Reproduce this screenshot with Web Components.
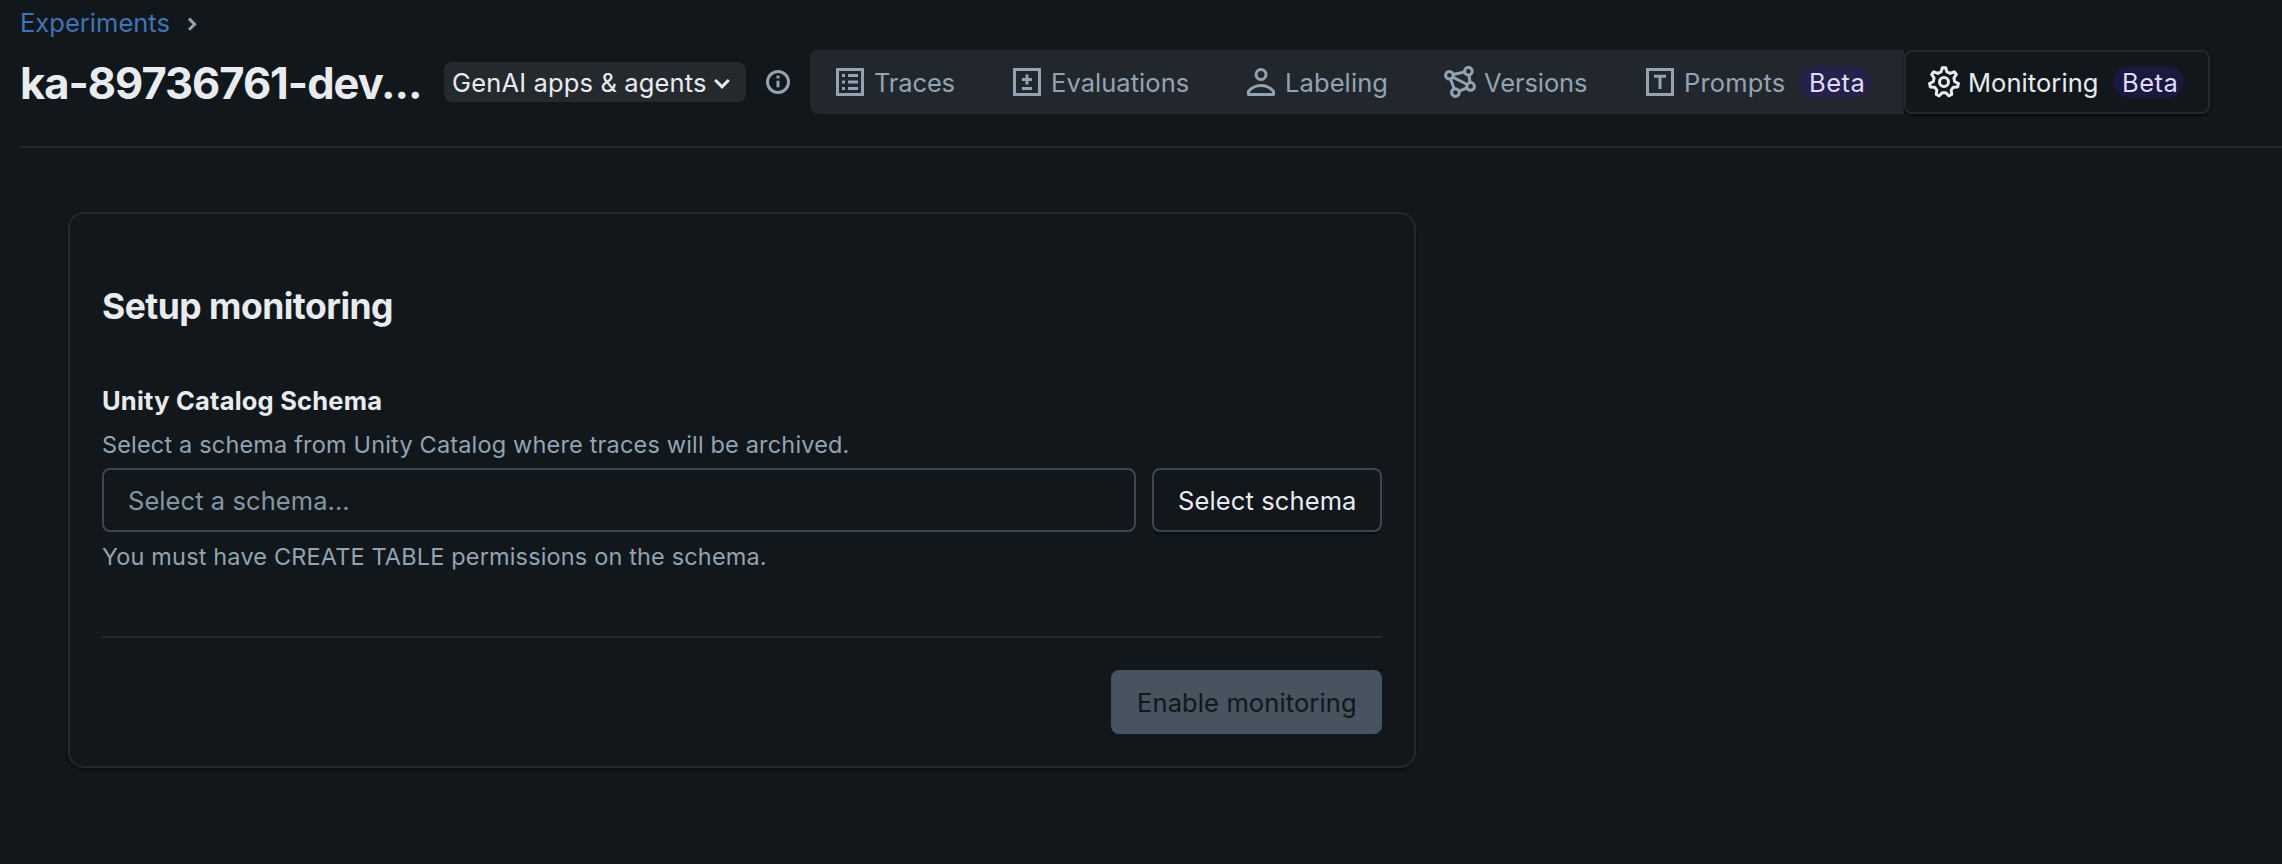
<!DOCTYPE html>
<html lang="en">
<head>
<meta charset="utf-8">
<title>Experiments - Monitoring</title>
<style>
  html, body { margin: 0; height: 100%; background: #11171b; overflow: hidden; }
  body {
    --bg: #11171b;
    --text: #e8ecf0;
    --muted: #92a4b3;
    --border: #22282d;
    --control-border: #3b4650;
    font: 400 25.5px/31px Inter, "Liberation Sans", sans-serif;
    color: var(--text);
  }
</style>
</head>
<body>
<experiment-page>
  <page-breadcrumb slot="breadcrumb">Experiments</page-breadcrumb>
  <page-header slot="header" heading="ka-89736761-dev..." kind="GenAI apps &amp; agents">
    <tab-item icon="list" style="width:177px;--ls:-.15px">Traces</tab-item>
    <tab-item icon="plusminus" style="width:234px;--ls:.05px">Evaluations</tab-item>
    <tab-item icon="user" style="width:199px;--ls:.1px">Labeling</tab-item>
    <tab-item icon="graph" style="width:200px;--ls:-.1px">Versions</tab-item>
    <tab-item icon="text" beta style="width:284px;--ls:.15px">Prompts</tab-item>
    <tab-item icon="gear" beta selected style="width:306px;--ls:.07px">Monitoring</tab-item>
  </page-header>
  <monitoring-card></monitoring-card>
</experiment-page>
<script>
const define = (name, render) => customElements.define(name, class extends HTMLElement {
  connectedCallback() {
    if (this.shadowRoot) return;
    this.attachShadow({ mode: 'open' }).innerHTML = render(this);
  }
});

/* Outline of a gear with seven rounded teeth around (8, 8). */
const gearPath = () => {
  const pts = [], step = Math.PI * 2 / 7;
  for (let i = 0; i < 7; i++) {
    const a = -Math.PI / 2 + i * step;
    for (const [k, r] of [[-.31, 5.35], [-.13, 7.25], [.13, 7.25], [.31, 5.35]])
      pts.push([8 + r * Math.cos(a + k * step), 8.05 + r * Math.sin(a + k * step)]);
  }
  return 'M' + pts.map(p => p.map(n => n.toFixed(2)).join(' ')).join('L') + 'Z';
};

const frame = '<rect x="1.75" y="1.75" width="12.5" height="12.5"/>';
const icons = {
  list: frame + '<path d="M7 4.75h5M7 8h5M7 11.25h5M4 4.75h1.5M4 8h1.5M4 11.25h1.5"/>',
  plusminus: frame + '<path d="M5.5 6.75h5M8 4.25v5M5.5 11.25h5"/>',
  user: '<circle cx="8" cy="4.25" r="2.5"/><path stroke-linejoin="round" d="M1.75 14.25v-1.5A8 8 0 0 1 8 9.75a8 8 0 0 1 6.25 3v1.5z"/>',
  graph: '<circle cx="2.7" cy="4.65" r="1.9"/><circle cx="12.2" cy="2.6" r="1.9"/><circle cx="13.3" cy="10.2" r="1.9"/><circle cx="5.7" cy="13.3" r="1.9"/><path d="M4.55 4.25 10.3 3M12.45 4.5l.6 3.8M4.35 5.6l7.3 3.65M3.25 6.5l1.9 5M7.5 12.6l4-1.6"/>',
  text: frame + '<path d="M5 5.1h6M8 5.1v6.4"/>',
  gear: `<path stroke-linejoin="round" d="${gearPath()}"/><circle cx="8" cy="8" r="2.25"/>`,
  info: '<circle cx="8" cy="8" r="5.25"/><path d="M8 7.4v3.2M8 4.8v1.5"/>',
  down: '<path d="M4.6 6.5 8 9.9l3.4-3.4"/>',
  right: '<path d="M6.5 5.3 9.3 8.1l-2.8 2.8"/>'
};

define('ui-icon', el => `
  <style>
    :host { display: block; flex: none; width: 32px; height: 32px; }
    svg { display: block; width: 100%; height: 100%; fill: none; stroke: currentColor; stroke-width: 1.5; }
  </style>
  <svg viewBox="0 0 16 16">${icons[el.getAttribute('name')]}</svg>`);

define('experiment-page', () => `
  <style>:host { display: block; height: 864px; background: var(--bg); }</style>
  <slot name="breadcrumb"></slot><slot name="header"></slot><slot></slot>`);

define('page-breadcrumb', () => `
  <style>
    :host { display: flex; align-items: flex-start; box-sizing: border-box; height: 50px; padding: 7px 0 0 20px; }
    a { color: #3f74b5; letter-spacing: .02px; width: 150px; }
    ui-icon { color: var(--muted); margin: 1px 0 0 6px; }
  </style>
  <a><slot></slot></a><ui-icon name="right"></ui-icon>`);

define('page-header', el => `
  <style>
    :host { display: flex; align-items: center; box-sizing: border-box; height: 98px; margin-left: 20px;
      padding-bottom: 32px; border-bottom: 2px solid var(--border); }
    h1 { margin: 0; padding-top: 2px; width: 424px; font-size: 43.5px; line-height: 52px; font-weight: 700;
      letter-spacing: -1.02px; white-space: nowrap; }
    .kind { display: flex; align-items: center; box-sizing: border-box; width: 302px; height: 40px; padding-left: 8px;
      background: #24292e; border-radius: 8px; white-space: nowrap; letter-spacing: .15px; }
    .kind span { padding-top: 1px; width: 254px; }
    .kind ui-icon { margin-top: 1px; }
    .info { margin: 0 16px; color: var(--muted); }
    nav { display: flex; height: 64px; }
  </style>
  <h1>${el.getAttribute('heading')}</h1>
  <div class="kind"><span>${el.getAttribute('kind').replace('&', '&amp;')}</span><ui-icon name="down"></ui-icon></div>
  <ui-icon class="info" name="info"></ui-icon>
  <nav><slot></slot></nav>`);

define('beta-tag', () => `
  <style>
    :host { display: block; box-sizing: border-box; width: 71px; height: 32px; margin-right: 2px; padding: 1px 0 0 9px;
      border-radius: 16px; background: rgba(42, 25, 130, .34); color: #e2daff; letter-spacing: .49px; }
  </style>Beta`);

define('tab-item', el => `
  <style>
    :host { display: flex; align-items: center; box-sizing: border-box; height: 64px; padding: 0 24px;
      background: #22272e; color: var(--muted); }
    :host(:first-child) { border-radius: 8px 0 0 8px; }
    :host([selected]) { padding: 0 22px; border: 2px solid var(--border); border-radius: 8px; background: var(--bg);
      color: var(--text); box-shadow: 0 2px 3px rgba(0, 0, 0, .45); }
    span { flex: 1; padding: 1px 0 0 8px; letter-spacing: var(--ls); white-space: nowrap; }
    :host([icon=text]) beta-tag { margin-right: 9px; }
  </style>
  <ui-icon name="${el.getAttribute('icon')}"></ui-icon><span><slot></slot></span>
  ${el.hasAttribute('beta') ? '<beta-tag></beta-tag>' : ''}`);

define('ui-button', () => `
  <style>
    :host { display: block; box-sizing: border-box; height: 64px; padding: 15px 24px; border: 2px solid var(--control-border);
      border-radius: 8px; letter-spacing: .12px; white-space: nowrap; box-shadow: 0 2px 1px rgba(0, 0, 0, .4); }
    :host([disabled]) { background: #47535e; border-color: #47535e; color: var(--bg); box-shadow: none; }
  </style><slot></slot>`);

define('text-field', () => `
  <style>
    :host { display: block; box-sizing: border-box; height: 64px; padding: 15px 24px; border: 2px solid var(--control-border);
      border-radius: 8px; color: #8496a4; letter-spacing: .07px; }
  </style><slot></slot>`);

define('monitoring-card', () => `
  <style>
    :host { display: block; box-sizing: border-box; width: 1348px; height: 556px; margin: 64px 0 0 68px; padding: 32px;
      border: 2px solid var(--border); border-radius: 16px; box-shadow: 0 2px 3px rgba(0, 0, 0, .4); }
    h2 { margin: 39px 0 57px; font-size: 35.5px; line-height: 43px; font-weight: 700; letter-spacing: -.53px; }
    h3 { margin: 0 0 14px; font-size: 25.5px; line-height: 31px; font-weight: 700; letter-spacing: .2px; }
    p { margin: 0; font-size: 23.5px; line-height: 29px; color: var(--muted); letter-spacing: .17px; }
    p.hint { letter-spacing: .155px; }
    .row { display: flex; gap: 16px; margin: 9px 0 10px; }
    text-field { width: 1034px; }
    .row ui-button { width: 230px; }
    footer { display: flex; justify-content: flex-end; margin-top: 65px; padding-top: 32px; border-top: 2px solid var(--border); }
    footer ui-button { width: 271px; }
  </style>
  <h2>Setup monitoring</h2>
  <h3>Unity Catalog Schema</h3>
  <p>Select a schema from Unity Catalog where traces will be archived.</p>
  <div class="row"><text-field>Select a schema...</text-field><ui-button>Select schema</ui-button></div>
  <p class="hint">You must have CREATE TABLE permissions on the schema.</p>
  <footer><ui-button disabled>Enable monitoring</ui-button></footer>`);
</script>
</body>
</html>
